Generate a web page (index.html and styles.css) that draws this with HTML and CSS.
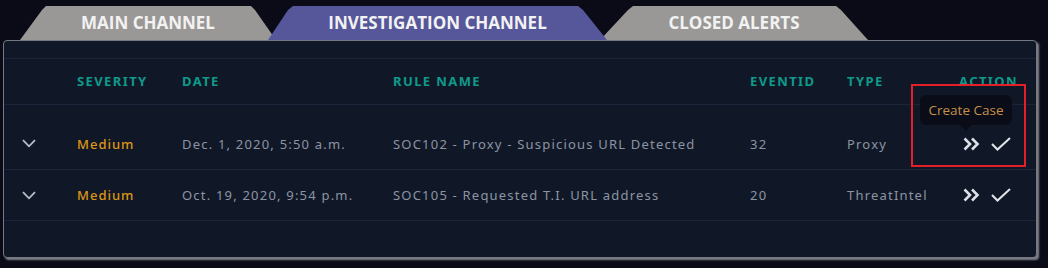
FILE: index.html
```html
<!DOCTYPE html>
<html>
<head>
<meta charset="utf-8">
<link rel="stylesheet" href="styles.css">
</head>
<body>
<div class="tabs">
  <div class="tab tab-main">MAIN CHANNEL</div>
  <div class="tab tab-inv">INVESTIGATION CHANNEL</div>
  <div class="tab tab-closed">CLOSED ALERTS</div>
</div>
<div class="panel">
  <div class="row head">
    <div></div>
    <div>SEVERITY</div>
    <div>DATE</div>
    <div>RULE NAME</div>
    <div>EVENTID</div>
    <div>TYPE</div>
    <div>ACTION</div>
  </div>
  <div class="row data first">
    <div class="exp"><svg width="14" height="9" viewBox="0 0 14 9"><path d="M1 1.2 L7 7.3 L13 1.2" fill="none" stroke="#b9bdc7" stroke-width="1.8"/></svg></div>
    <div class="sev">Medium</div>
    <div>Dec. 1, 2020, 5:50 a.m.</div>
    <div>SOC102 - Proxy - Suspicious URL Detected</div>
    <div>32</div>
    <div>Proxy</div>
    <div class="actions">
      <span class="tip">Create Case</span>
      <svg width="17" height="14" viewBox="0 0 17 14"><path d="M1.5 1.5 L7 7 L1.5 12.5 M9 1.5 L14.5 7 L9 12.5" fill="none" stroke="#dde0e6" stroke-width="2.6"/></svg>
      <svg width="20" height="14" viewBox="0 0 20 14"><path d="M1 7 L6.5 12.5 L19 1" fill="none" stroke="#e2e4e8" stroke-width="2"/></svg>
    </div>
  </div>
  <div class="row data">
    <div class="exp"><svg width="14" height="9" viewBox="0 0 14 9"><path d="M1 1.2 L7 7.3 L13 1.2" fill="none" stroke="#b9bdc7" stroke-width="1.8"/></svg></div>
    <div class="sev">Medium</div>
    <div>Oct. 19, 2020, 9:54 p.m.</div>
    <div>SOC105 - Requested T.I. URL address</div>
    <div>20</div>
    <div>ThreatIntel</div>
    <div class="actions">
      <svg width="17" height="14" viewBox="0 0 17 14"><path d="M1.5 1.5 L7 7 L1.5 12.5 M9 1.5 L14.5 7 L9 12.5" fill="none" stroke="#dde0e6" stroke-width="2.6"/></svg>
      <svg width="20" height="14" viewBox="0 0 20 14"><path d="M1 7 L6.5 12.5 L19 1" fill="none" stroke="#e2e4e8" stroke-width="2"/></svg>
    </div>
  </div>
  <div class="highlight"></div>
</div>
</body>
</html>
```

FILE: styles.css
```css
html, body {
  margin: 0;
  padding: 0;
  background: #0a0b17;
  width: 1048px;
  height: 268px;
  overflow: hidden;
}

.tabs {
  display: flex;
  padding: 6px 0 0 20px;
  height: 34px;
}

.tab {
  height: 34px;
  display: flex;
  align-items: center;
  justify-content: center;
  font-family: "Open Sans", sans-serif;
  font-weight: 700;
  font-size: 17px;
  color: #f2f2f2;
  background: #9a9896;
  padding-bottom: 2px;
  box-sizing: border-box;
}

.tab-main {
  width: 256px;
  clip-path: polygon(0 100%, 22px 4px, 26px 0, calc(100% - 25px) 0, calc(100% - 21px) 4px, 100% 100%);
}

.tab-inv {
  width: 339px;
  margin-left: -8px;
  background: #56579a;
  position: relative;
  z-index: 2;
  clip-path: polygon(0 100%, 20px 4px, 25px 0, calc(100% - 29px) 0, calc(100% - 24px) 4px, 100% 100%);
}

.tab-closed {
  width: 268px;
  margin-left: -7px;
  clip-path: polygon(0 100%, 28px 4px, 33px 0, calc(100% - 32px) 0, calc(100% - 27px) 4px, 100% 100%);
}

.panel {
  position: relative;
  margin-left: 3px;
  width: 1034px;
  height: 218px;
  box-sizing: border-box;
  border: 1px solid #767981;
  border-radius: 4px;
  background: #101827;
  box-shadow: 2px 2px 2px rgba(170, 170, 175, 0.75);
  padding-top: 17px;
}

.row {
  display: grid;
  grid-template-columns: 73px 105px 211px 357px 97px 112px 1fr;
  align-items: center;
  border-top: 1px solid #1b2439;
  font-family: "Noto Sans", sans-serif;
  letter-spacing: 1.2px;
}

.head {
  height: 47px;
  font-weight: 700;
  font-size: 13px;
  letter-spacing: 1.4px;
  color: #0f9a8b;
  border-bottom: 1px solid #1b2439;
  box-sizing: border-box;
  padding-bottom: 2px;
}

.data {
  font-size: 13px;
  color: #8c94a4;
  height: 51px;
  border-top: none;
  border-bottom: 1px solid #1b2439;
  box-sizing: border-box;
}

.data.first {
  height: 65px;
  padding-top: 13px;
}

.exp {
  padding-left: 18px;
  display: flex;
}

.sev {
  color: #dc9614;
  font-weight: 500;
  letter-spacing: 1px;
}

.actions {
  position: relative;
  display: flex;
  align-items: center;
  gap: 11px;
  padding-left: 4px;
}

.tip {
  position: absolute;
  left: -39px;
  bottom: 26px;
  width: 92px;
  height: 30px;
  box-sizing: border-box;
  background: #0a0d17;
  border-radius: 6px;
  color: #c6904a;
  font-family: "Open Sans", sans-serif;
  font-size: 13.5px;
  letter-spacing: 0;
  display: flex;
  align-items: center;
  justify-content: center;
}

.tip::after {
  content: "";
  position: absolute;
  left: 40px;
  bottom: -6px;
  border-left: 6px solid transparent;
  border-right: 6px solid transparent;
  border-top: 6px solid #0a0d17;
}

.highlight {
  position: absolute;
  left: 907px;
  top: 43px;
  width: 115px;
  height: 83px;
  box-sizing: border-box;
  border: 2.5px solid #e51f2a;
}
```
